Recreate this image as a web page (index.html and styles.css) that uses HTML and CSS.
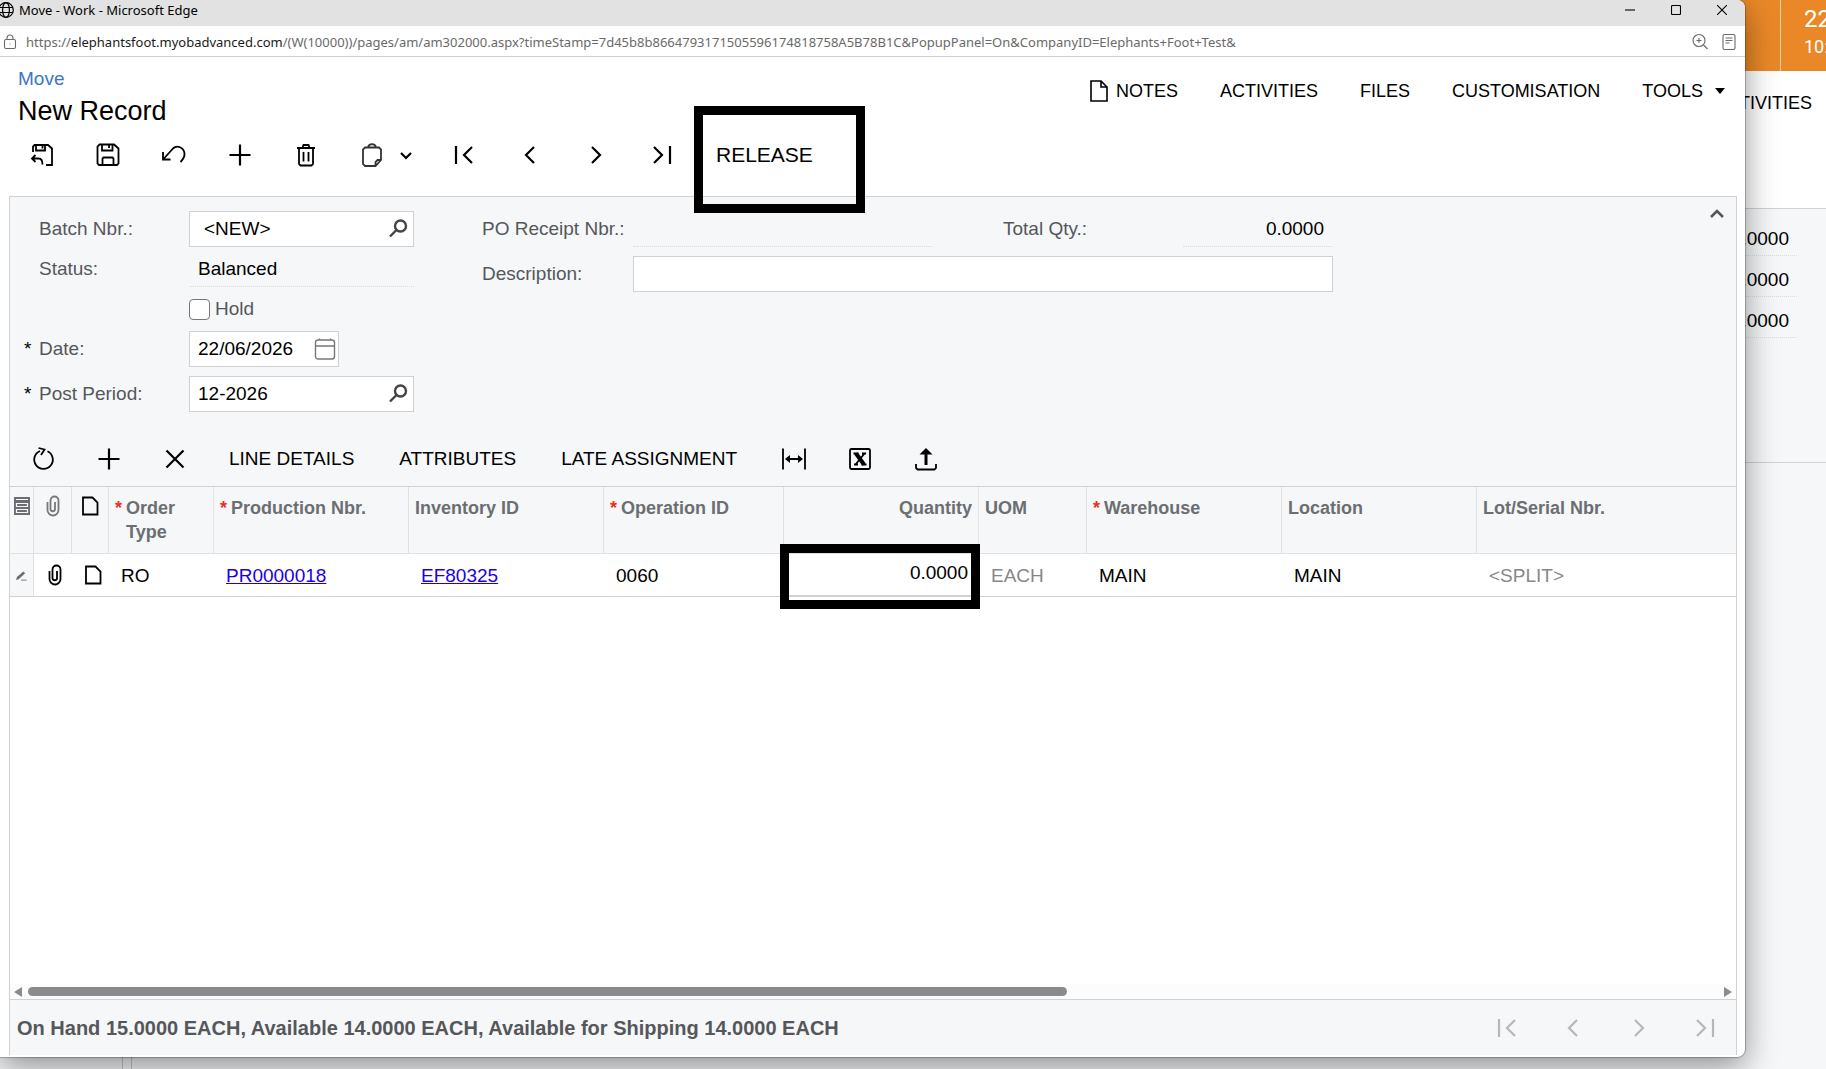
FILE: index.html
```html
<!DOCTYPE html>
<html lang="en">
<head>
<meta charset="utf-8">
<title>Move - Work</title>
<link rel="stylesheet" href="styles.css">
</head>
<body>
<svg class="sprite" aria-hidden="true">
  <symbol id="i-first" viewBox="0 0 24 24"><path d="M4 3v18M20 4l-8 8 8 8"/></symbol>
  <symbol id="i-prev" viewBox="0 0 24 24"><path d="M16 4l-8 8 8 8"/></symbol>
  <symbol id="i-next" viewBox="0 0 24 24"><path d="M8 4l8 8-8 8"/></symbol>
  <symbol id="i-last" viewBox="0 0 24 24"><path d="M20 3v18M4 4l8 8-8 8"/></symbol>
  <symbol id="i-plus" viewBox="0 0 24 24"><path d="M12 1.500v21M1.500 12h21"/></symbol>
  <symbol id="i-page" viewBox="0 0 24 24"><path d="M5 3.500h9.500l5 5v12H5z"/></symbol>
  <symbol id="i-clip" viewBox="0 0 24 24"><path d="M6.500 8v8a5.500 5.500 0 0 0 11 0V6.500a4 4 0 0 0-8 0V15a2.200 2.200 0 0 0 4.500 0V8"/></symbol>
  <symbol id="i-search" viewBox="0 0 24 24"><circle cx="14.500" cy="9" r="5.500"/><path d="M10.500 13L4 19.500"/></symbol>
</svg>

<div class="backdrop">
  <div class="banner"><div class="banner-clock"><span class="clock-day">22</span><span class="clock-time">10:</span></div></div>
  <div class="back-menu">ACTIVITIES</div>
  <div class="back-panel">
    <div class="back-value">0.0000</div>
    <div class="back-value">0.0000</div>
    <div class="back-value">0.0000</div>
  </div>
  <div class="back-grid"><span class="back-splitter"></span></div>
</div>

<div class="window">
  <div class="titlebar">
    <svg class="globe" viewBox="0 0 16 16"><circle cx="8" cy="8" r="7.300"/><ellipse cx="8" cy="8" rx="3.400" ry="7.300"/><path d="M1.300 5.500h13.400M1.300 10.500h13.400"/></svg>
    <span class="title">Move - Work - Microsoft Edge</span>
    <button class="win-btn" aria-label="Minimise"><svg viewBox="0 0 10 10"><path d="M0 5h10"/></svg></button>
    <button class="win-btn" aria-label="Maximise"><svg viewBox="0 0 10 10"><rect x=".5" y=".5" width="9" height="9" rx="1"/></svg></button>
    <button class="win-btn" aria-label="Close"><svg viewBox="0 0 10 10"><path d="M0 0l10 10M10 0L0 10"/></svg></button>
  </div>
  <div class="urlbar">
    <svg class="lock" viewBox="0 0 14 16"><rect x="1.500" y="5.500" width="11" height="9" rx="1.500"/><path d="M4 5.500V4a3 3 0 0 1 6 0v1.500M6.500 10h1"/></svg>
    <div class="url">https://<span class="host">elephantsfoot.myobadvanced.com</span>/(W(10000))/pages/am/am302000.aspx?timeStamp=7d45b8b8664793171505596174818758A5B78B1C&amp;PopupPanel=On&amp;CompanyID=Elephants+Foot+Test&amp;</div>
    <button class="url-btn" aria-label="Zoom"><svg viewBox="0 0 16 18"><circle cx="7" cy="7.500" r="6"/><path d="M11.500 12l4 4M4.500 7.500h5M7 5v5"/></svg></button>
    <button class="url-btn" aria-label="Reader"><svg viewBox="0 0 16 18"><rect x="2" y="1.500" width="12" height="15" rx="1.500"/><path d="M4.500 5h7M4.500 7.500h7M4.500 10h4"/></svg></button>
  </div>

  <header class="header">
    <div class="headline">
      <div class="titles">
        <a class="crumb" href="#">Move</a>
        <h1>New Record</h1>
      </div>
      <nav class="menu">
        <button class="menu-notes"><svg class="notes-icon" viewBox="0 0 18 22"><path d="M1 1h10l6 6v14H1zM11 1v6h6"/></svg>NOTES</button>
        <button>ACTIVITIES</button>
        <button>FILES</button>
        <button>CUSTOMISATION</button>
        <button>TOOLS<span class="caret"></span></button>
      </nav>
    </div>
    <div class="toolbar">
      <button class="icon-btn" aria-label="Save and close"><svg class="icon" viewBox="0 0 24 24"><path d="M3 9V3.500L4.500 2H18l4 3.500V22h-6M6 2v5.500h9V2M12.500 2v3.500M5.500 12L2 15.500 5.500 19M2.500 15.500h6c3 0 4 2 4 6"/></svg></button>
      <button class="icon-btn" aria-label="Save"><svg class="icon" viewBox="0 0 24 24"><path d="M3.500 1.500H18l4.500 4v15L21 22H3l-1.500-1.500v-17zM6 1.500v6h10.500v-6M13 1.500V5M6.500 22v-6.500l1-1h9l1 1V22"/></svg></button>
      <button class="icon-btn" aria-label="Undo"><svg class="icon" viewBox="0 0 24 24"><path d="M1 9v7.500h7.500M1.500 16L11 5.500c4-4 11-1 11.500 5 .2 3-1.500 6-4 8.500"/></svg></button>
      <button class="icon-btn" aria-label="Add"><svg class="icon bold"><use href="#i-plus"/></svg></button>
      <button class="icon-btn" aria-label="Delete"><svg class="icon" viewBox="0 0 24 24"><path d="M3 5h18M8.500 4.500L9.500 2h5l1 2.500M5 5v16l1.500 1.500h11L19 21V5M9.500 9v9.500M14.500 9v9.500"/></svg></button>
      <div class="split">
        <button class="split-main" aria-label="Clipboard"><svg class="icon" viewBox="0 0 24 24"><path d="M5 4.500h14l2 2V17l-5.500 6H5l-2-2V6.500zM8 4.500C8.500 2 10 1.200 12 1.200s3.500.8 4 3.300M21 17h-3.500l-2 2v4"/></svg></button>
        <button class="split-more" aria-label="Clipboard options"><svg class="chevron" viewBox="0 0 14 14"><path d="M2 5l5 5 5-5"/></svg></button>
      </div>
      <button class="icon-btn" aria-label="First"><svg class="icon bold"><use href="#i-first"/></svg></button>
      <button class="icon-btn" aria-label="Previous"><svg class="icon bold"><use href="#i-prev"/></svg></button>
      <button class="icon-btn" aria-label="Next"><svg class="icon bold"><use href="#i-next"/></svg></button>
      <button class="icon-btn" aria-label="Last"><svg class="icon bold"><use href="#i-last"/></svg></button>
      <div class="release"><button class="release-btn">RELEASE</button><span class="mark mark-release"></span></div>
    </div>
  </header>

  <main class="panel">
    <form class="form" onsubmit="return false">
      <div class="col-left">
        <div class="field"><label for="batch">Batch Nbr.:</label><span class="box lookup"><input class="indent" id="batch" value="<NEW>"><svg class="icon grey"><use href="#i-search"/></svg></span></div>
        <div class="field"><span class="label">Status:</span><output class="readonly grow">Balanced</output></div>
        <div class="field"><span class="label"></span><input type="checkbox" id="hold"><label class="hold" for="hold">Hold</label></div>
        <div class="field required"><label for="date">Date:</label><span class="box date"><input id="date" value="22/06/2026"><svg class="calendar" viewBox="0 0 22 24"><rect x="1.500" y="3" width="19" height="19" rx="2.500"/><path d="M1.500 9h19M5.500 1.500V3M16.500 1.500V3"/></svg></span></div>
        <div class="field required spaced"><label for="period">Post Period:</label><span class="box lookup"><input id="period" value="12-2026"><svg class="icon grey"><use href="#i-search"/></svg></span></div>
      </div>
      <div class="col-right">
        <div class="pair">
          <div class="field half"><span class="label">PO Receipt Nbr.:</span><output class="readonly grow"></output></div>
          <div class="field"><span class="label wide">Total Qty.:</span><output class="readonly total">0.0000</output></div>
        </div>
        <div class="field spaced"><label for="desc">Description:</label><span class="box grow"><input id="desc"></span></div>
      </div>
      <button class="collapse" aria-label="Collapse"><svg viewBox="0 0 16 16"><path d="M2 11l6-6 6 6"/></svg></button>
    </form>

    <div class="toolbar grid-tools">
      <button class="icon-btn" aria-label="Refresh"><svg class="icon" viewBox="0 0 24 24"><path d="M9 4a9.300 9.300 0 1 0 7.500.2M7.500 1l6 1.500L10 8"/></svg></button>
      <button class="icon-btn" aria-label="Add row"><svg class="icon bold"><use href="#i-plus"/></svg></button>
      <button class="icon-btn" aria-label="Delete row"><svg class="icon bold" viewBox="0 0 24 24"><path d="M3.500 3.500l17 17M20.500 3.500l-17 17"/></svg></button>
      <button class="text-btn">LINE DETAILS</button>
      <button class="text-btn">ATTRIBUTES</button>
      <button class="text-btn">LATE ASSIGNMENT</button>
      <button class="icon-btn" aria-label="Fit columns"><svg class="icon" viewBox="0 0 24 24"><path d="M1 1.500v21M23 1.500v21M4 12h16"/><path class="solid" d="M3 12l5-4v8zM21 12l-5-4v8z"/></svg></button>
      <button class="icon-btn" aria-label="Export to Excel"><svg class="icon" viewBox="0 0 24 24"><rect x="2" y="2" width="20" height="20" rx="1.500"/><path class="thick" d="M8 6.500l8 11"/><path d="M16.500 6.500l-9 11M5.500 6.500h5M14 6.500h4M6 17.500h4M13.500 17.500h5"/></svg></button>
      <button class="icon-btn" aria-label="Import"><svg class="icon" viewBox="0 0 24 24"><path d="M2 17v4l1.500 1.500h17L22 21v-4"/><path class="mid" d="M12 18V5"/><path class="solid" d="M12 1l6.500 6.500h-13z"/></svg></button>
    </div>

    <div class="table-area">
      <table>
        <colgroup><col class="w24"><col class="w38"><col class="w37"><col class="w105"><col class="w195"><col class="w195"><col class="w180"><col class="w195"><col class="w108"><col class="w195"><col class="w195"><col></colgroup>
        <thead>
          <tr>
            <th class="ico"><svg class="small" viewBox="0 0 16 18"><path class="solid" d="M0 0h16v18H0z"/><path class="white" d="M2 2.500h12M2.500 6.500h11v3h-11zM2.500 12.500h11v3h-11z"/></svg></th>
            <th class="ico"><svg class="icon grey-line"><use href="#i-clip"/></svg></th>
            <th class="ico"><svg class="icon"><use href="#i-page"/></svg></th>
            <th class="req">Order Type</th>
            <th class="req">Production Nbr.</th>
            <th>Inventory ID</th>
            <th class="req">Operation ID</th>
            <th class="num">Quantity</th>
            <th>UOM</th>
            <th class="req">Warehouse</th>
            <th>Location</th>
            <th>Lot/Serial Nbr.</th>
          </tr>
        </thead>
        <tbody>
          <tr>
            <td class="ico selector"><svg class="pencil" viewBox="0 0 12 12"><path class="solid" d="M0 11l1-3.500L8 1.500l2 2L3 10z"/><path d="M5.500 11h6"/></svg></td>
            <td class="ico offset"><svg class="icon"><use href="#i-clip"/></svg></td>
            <td class="ico offset"><svg class="icon"><use href="#i-page"/></svg></td>
            <td>RO</td>
            <td><a href="#">PR0000018</a></td>
            <td><a href="#">EF80325</a></td>
            <td>0060</td>
            <td class="num"><span class="mark mark-qty"></span>0.0000</td>
            <td class="dim">EACH</td>
            <td>MAIN</td>
            <td>MAIN</td>
            <td class="dim">&lt;SPLIT&gt;</td>
          </tr>
        </tbody>
      </table>
    </div>
    <div class="scrollbar"><span class="arrow-left"></span><span class="track"><span class="thumb"></span></span><span class="arrow-right"></span></div>
    <footer class="footer">
      <span class="stock">On Hand 15.0000 EACH, Available 14.0000 EACH, Available for Shipping 14.0000 EACH</span>
      <div class="pager">
        <button class="icon-btn" aria-label="First page"><svg class="icon bold"><use href="#i-first"/></svg></button>
        <button class="icon-btn" aria-label="Previous page"><svg class="icon bold"><use href="#i-prev"/></svg></button>
        <button class="icon-btn" aria-label="Next page"><svg class="icon bold"><use href="#i-next"/></svg></button>
        <button class="icon-btn" aria-label="Last page"><svg class="icon bold"><use href="#i-last"/></svg></button>
      </div>
    </footer>
  </main>
</div>
</body>
</html>
```
FILE: styles.css
```css
* { box-sizing: border-box; }
html, body { height: 100%; }
body {
  margin: 0;
  overflow: hidden;
  position: relative;
  font: 19px/24px "Liberation Sans", Arial, sans-serif;
  color: #000;
  background: #f5f7f9;
}
button {
  font: inherit; color: inherit;
  background: none; border: 0; padding: 0; margin: 0;
  white-space: nowrap;
}
svg { fill: none; stroke: currentColor; stroke-width: 1.8; display: block; flex: none; }
.sprite { position: absolute; width: 0; height: 0; }
.solid { fill: currentColor; stroke: none; }
.icon { width: 24px; height: 24px; }
.bold { stroke-width: 2.2; }
.thick { stroke-width: 4; }
.mid { stroke-width: 3; }

/* page behind the pop-up */
.backdrop { height: 100%; display: flex; flex-direction: column; }
.banner { height: 71px; flex: none; background: #ea8828; display: flex; justify-content: flex-end; }
.banner-clock {
  width: 46px; padding: 4px 0 0 23px; overflow: hidden;
  border-left: 1px solid #f6cfa6; color: #fff;
  font-family: Roboto, sans-serif; display: flex; flex-direction: column;
}
.clock-day { font-size: 24px; line-height: 30px; }
.clock-time { font-size: 18px; line-height: 26px; }
.back-menu { height: 137px; flex: none; padding: 20px 14px 0 0; background: #fff; text-align: right; font-size: 18px; }
.back-panel { height: 254px; flex: none; padding: 10px 29px 0 0; border-top: 1px solid #cfd1d6; display: flex; flex-direction: column; align-items: flex-end; gap: 4px; }
.back-value { width: 150px; height: 37px; padding: 8px 8px 0 0; text-align: right; border-bottom: 1px dotted #dcdde0; }
.back-grid { flex: 1; border-top: 1px solid #cfd1d6; display: flex; }
.back-splitter { margin-left: 122px; width: 10px; border: solid #c4c6ca; border-width: 0 1px; }

/* pop-up window */
.window {
  position: absolute; inset: 0 81px 12px 0;
  display: flex; flex-direction: column;
  background: #fff;
  border-radius: 0 8px 8px 0;
  box-shadow: 0 0 1px 1px rgba(0,0,0,.25), 0 10px 32px rgba(0,0,0,.42);
}
.titlebar { height: 26px; flex: none; display: flex; align-items: center; background: #e2e2e2; border-radius: 0 8px 0 0; font-family: "Noto Sans", "Open Sans", sans-serif; font-size: 13px; padding-bottom: 6px; }
.globe { width: 16px; height: 16px; margin: 0 5px 0 -2px; stroke-width: 1.2; }
.title { flex: 1; }
.win-btn { width: 46px; height: 21px; display: flex; align-items: center; justify-content: center; }
.win-btn svg { width: 10px; height: 10px; stroke-width: 1.1; }
.urlbar { height: 31px; flex: none; display: flex; align-items: center; border-bottom: 1px solid #cfcfcf; padding: 1px 8px 0 3px; color: #6a6a6a; font-family: "Noto Sans", "Open Sans", sans-serif; font-size: 13px; }
.lock { width: 14px; height: 16px; margin-right: 9px; stroke-width: 1.1; }
.url { flex: 1; white-space: nowrap; overflow: hidden; }
.host { color: #1a1a1a; }
.url-btn { margin-left: 13px; }
.url-btn svg { width: 16px; height: 18px; stroke-width: 1.1; }

.header { padding: 8px 8px 13px 9px; flex: none; }
.headline { display: flex; justify-content: space-between; padding: 0 12px 0 9px; }
.titles { display: flex; flex-direction: column; }
.crumb { color: #3d75c9; text-decoration: none; line-height: 28px; }
h1 { margin: 0; padding-top: 2px; font-size: 27px; line-height: 32px; font-weight: 400; }
.menu { display: flex; gap: 42px; height: 52px; align-items: center; font-size: 18px; }
.menu button { display: flex; align-items: center; }
.notes-icon { width: 18px; height: 22px; margin-right: 8px; stroke-width: 1.6; }
.caret { border: solid transparent; border-width: 6px 5px 0; border-top-color: #000; margin-left: 12px; }

.toolbar { display: flex; align-items: center; height: 56px; }
.icon-btn { width: 66px; height: 48px; flex: none; display: flex; align-items: center; justify-content: center; }
.split { display: flex; margin: 0 17px 0 7px; }
.split-main { width: 52px; display: flex; justify-content: center; color: #333; }
.split-more { width: 16px; display: flex; justify-content: center; align-items: center; }
.chevron { width: 14px; height: 14px; stroke-width: 2.2; }
.release { position: relative; font-size: 21px; }
.release-btn { padding: 0 21px; height: 48px; }
.mark { position: absolute; border: 9px solid #000; pointer-events: none; }
.mark-release { left: -1px; top: -25px; width: 171px; height: 107px; }
.text-btn { padding: 0 24px 0 21px; height: 48px; }

.panel {
  flex: 1; min-height: 0; margin: 0 8px 2px 9px;
  display: flex; flex-direction: column;
  border: solid #cfd1d6; border-width: 1px 1px 0;
  background: #f5f7f9;
}
.form { display: flex; padding: 14px 11px 16px 29px; color: #55575b; }
.col-left { width: 375px; margin-right: 68px; display: flex; flex-direction: column; gap: 4px; }
.col-right { width: 851px; display: flex; flex-direction: column; gap: 4px; }
.field { display: flex; align-items: center; height: 36px; position: relative; }
.spaced { margin-top: 5px; }
.field label:first-child, .label { width: 150px; flex: none; }
.col-right .field label:first-child, .col-right .label { width: 151px; }
.col-right .field .wide { width: 180px; }
.required::before { content: "*"; position: absolute; left: -15px; color: #000; }
.pair { display: flex; justify-content: space-between; }
.half { width: 451px; }
.grow { flex: 1; }
.box { display: flex; align-items: center; height: 36px; background: #fff; border: 1px solid #cfd1d6; }
.box input { flex: 1; min-width: 0; height: 34px; border: 0; outline: 0; background: none; padding: 0 0 1px 8px; font: inherit; color: #000; }
.box .indent { padding-left: 14px; }
.lookup { width: 225px; padding-right: 3px; }
.date { width: 150px; padding-right: 2px; }
.grey { color: #444; stroke-width: 2.4; }
.calendar { color: #777; width: 22px; height: 24px; stroke-width: 1.4; }
.readonly { height: 36px; line-height: 35px; padding: 0 9px; color: #000; border-bottom: 1px dotted #dcdde0; }
.total { width: 150px; text-align: right; }
input[type="checkbox"] { appearance: none; width: 21px; height: 21px; margin: 0; background: #fff; border: 1px solid #777; border-radius: 4px; }
.hold { margin-left: 5px; }
.collapse { margin: -5px 0 0 auto; align-self: flex-start; height: 16px; }
.collapse svg { width: 16px; height: 16px; stroke-width: 2.6; }

.grid-tools { height: 58px; flex: none; padding-top: 3px; }

.table-area { flex: 1; min-height: 0; background: #fff; border-top: 1px solid #cfd1d6; }
table { width: 100%; table-layout: fixed; border-collapse: separate; border-spacing: 0; }
.w24 { width: 24px; } .w38 { width: 38px; } .w37 { width: 37px; }
.w105 { width: 105px; } .w108 { width: 108px; } .w180 { width: 180px; } .w195 { width: 195px; }
th {
  height: 67px; padding: 9px 6px; vertical-align: top; text-align: left;
  font-size: 18px; color: #6c6e72; background: #f5f7f9;
  border: solid #dfe1e5; border-width: 0 1px 1px 0;
}
th:last-child { border-right: 0; }
th.req { padding-left: 17px; position: relative; }
th.req::before { content: "*"; color: #e8321a; position: absolute; left: 6px; }
th.num, td.num { text-align: right; }
td { height: 43px; padding: 1px 12px 0; border-bottom: 1px solid #cfd1d6; }
td.num { position: relative; padding: 0 11px 3px 0; border-bottom-width: 2px; }
.mark-qty { left: -4px; top: -10px; width: 200px; height: 65px; }
th.ico, td.ico { padding: 0; color: #000; }
th.ico { padding-top: 7px; }
.ico svg { margin: 0 auto; }
td.offset { padding-left: 4px; }
.ico .grey-line { color: #777; }
.ico .small { width: 16px; height: 18px; margin-top: 3px; color: #6c6e72; }
.white { stroke: #f5f7f9; stroke-width: 1.2; }
td.selector { background: #f5f7f9; border-right: 1px solid #dfe1e5; color: #6c6e72; }
.pencil { width: 11px; height: 11px; stroke-width: 1; }
td a { color: #1a00e8; }
.dim { color: #85878a; }

.scrollbar { height: 15px; flex: none; display: flex; align-items: center; padding: 0 4px; gap: 6px; background: #fcfcfc; }
.track { flex: 1; height: 9px; }
.thumb { display: block; width: 61.5%; height: 9px; border-radius: 5px; background: #8b8b8b; }
.arrow-left, .arrow-right { border: solid transparent; border-width: 5px 0; }
.arrow-left { border-right: 8px solid #8b8b8b; }
.arrow-right { border-left: 8px solid #8b8b8b; }
.footer { height: 56px; flex: none; display: flex; align-items: center; padding-left: 7px; border-top: 1px solid #cfd1d6; color: #55575b; font-weight: 700; }
.stock { flex: 1; font-size: 20px; }
.pager { display: flex; margin-right: -2px; color: #b5b7ba; }
```
